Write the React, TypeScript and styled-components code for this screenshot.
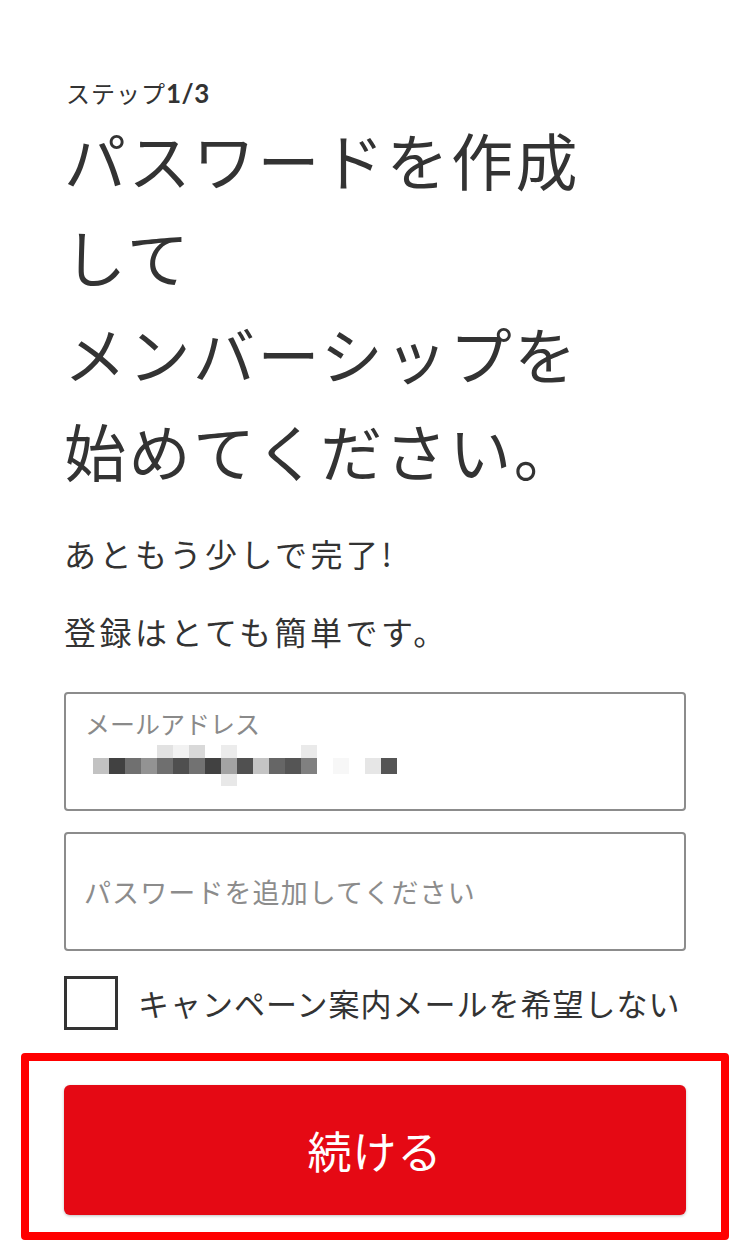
import React from 'react';
import styled, { createGlobalStyle } from 'styled-components';

const GlobalStyle = createGlobalStyle`
  html, body {
    margin: 0;
    padding: 0;
    background: #fff;
  }
  body {
    font-family: "Noto Sans CJK JP", "Noto Sans", sans-serif;
    color: #333;
  }
`;

// pixelated e-mail value, one row per band of the mosaic
const MOSAIC: string[][] = [
  ['', '', '', '', '#e2e2e2', '#f2f2f2', '#d9d9d9', '', '#ececec', '', '', '', '', '#eaeaea', '', '', '', '', ''],
  ['#c2c2c2', '#414141', '#707070', '#939393', '#6f6f6f', '#4f4f4f', '#727272', '#414141', '#a3a3a3', '#505050', '#c4c4c4', '#666666', '#555555', '#808080', '', '#f7f7f7', '', '#e6e6e6', '#555555'],
  ['', '', '', '', '', '', '', '', '#e8e8e8', '', '', '', '', '', '', '', '', '', ''],
];

export default function App() {
  return (
    <>
      <GlobalStyle />
      <Page>
        <Step>
          ステップ<b>1/3</b>
        </Step>
        <Title>
          パスワードを作成
          <br />
          して
          <br />
          メンバーシップを
          <br />
          始めてください。
        </Title>
        <Lead>あともう少しで完了!</Lead>
        <Lead $gap>登録はとても簡単です。</Lead>

        <Field>
          <FieldLabel>メールアドレス</FieldLabel>
          <Mosaic>
            {MOSAIC.map((row, r) =>
              row.map((c, i) => <Cell key={`${r}-${i}`} $c={c} />)
            )}
          </Mosaic>
        </Field>
        <Field $center>
          <Placeholder>パスワードを追加してください</Placeholder>
        </Field>

        <CheckRow>
          <CheckBox />
          <CheckText>キャンペーン案内メールを希望しない</CheckText>
        </CheckRow>

        <Highlight>
          <Button>続ける</Button>
        </Highlight>
      </Page>
    </>
  );
}

const Page = styled.div`
  width: 750px;
  box-sizing: border-box;
  padding: 77px 64px 0;
  display: flex;
  flex-direction: column;
`;

const Step = styled.div`
  font-size: 24px;
  line-height: 32px;
  color: #333;
  padding-left: 2px;
  letter-spacing: 1px;

  b {
    font-family: "Lato", "Noto Sans", sans-serif;
    font-weight: 700;
    font-size: 26px;
    letter-spacing: 0.5px;
  }
`;

const Title = styled.h1`
  margin: 2px 0 0;
  font-size: 62px;
  font-weight: 400;
  line-height: 97px;
  letter-spacing: 2.5px;
  color: #333;
`;

const Lead = styled.p<{ $gap?: boolean }>`
  margin: ${(p) => (p.$gap ? '34px' : '32px')} 0 0;
  font-size: 32px;
  line-height: 44px;
  letter-spacing: 3.5px;
  color: #333;
`;

const Field = styled.div<{ $center?: boolean }>`
  box-sizing: border-box;
  height: 119px;
  border: 2px solid #8c8c8c;
  border-radius: 4px;
  margin-top: ${(p) => (p.$center ? '21px' : '39px')};
  padding: ${(p) => (p.$center ? '0 18px' : '14px 19px 0')};
  display: flex;
  flex-direction: column;
  justify-content: ${(p) => (p.$center ? 'center' : 'flex-start')};
`;

const FieldLabel = styled.div`
  font-size: 25px;
  line-height: 30px;
  color: #8a8a8a;
`;

const Mosaic = styled.div`
  margin: 7px 0 0 8px;
  display: grid;
  grid-template-columns: repeat(19, 16px);
  grid-template-rows: 13px 16px 12px;
`;

const Cell = styled.span<{ $c: string }>`
  background: ${(p) => p.$c || 'transparent'};
`;

const Placeholder = styled.div`
  font-size: 27px;
  line-height: 34px;
  color: #8c8c8c;
  letter-spacing: 1.1px;
`;

const CheckRow = styled.div`
  margin-top: 25px;
  display: flex;
  align-items: center;
  gap: 20px;
`;

const CheckBox = styled.div`
  box-sizing: border-box;
  width: 54px;
  height: 54px;
  border: 3px solid #333;
  flex: none;
`;

const CheckText = styled.div`
  font-size: 31px;
  line-height: 40px;
  color: #333;
  letter-spacing: 1px;
  white-space: nowrap;
`;

const Highlight = styled.div`
  margin: 23px -43px 0;
  border: 8px solid #ff0000;
  border-radius: 4px;
  padding: 24px 35px 17px;
`;

const Button = styled.button`
  display: block;
  width: 100%;
  height: 130px;
  border: 0;
  border-radius: 6px;
  background: #e50914;
  color: #fff;
  font-family: "Noto Sans CJK JP", sans-serif;
  font-size: 44px;
  letter-spacing: 1px;
  box-shadow: 0 1px 3px rgba(0, 0, 0, 0.25);
`;
